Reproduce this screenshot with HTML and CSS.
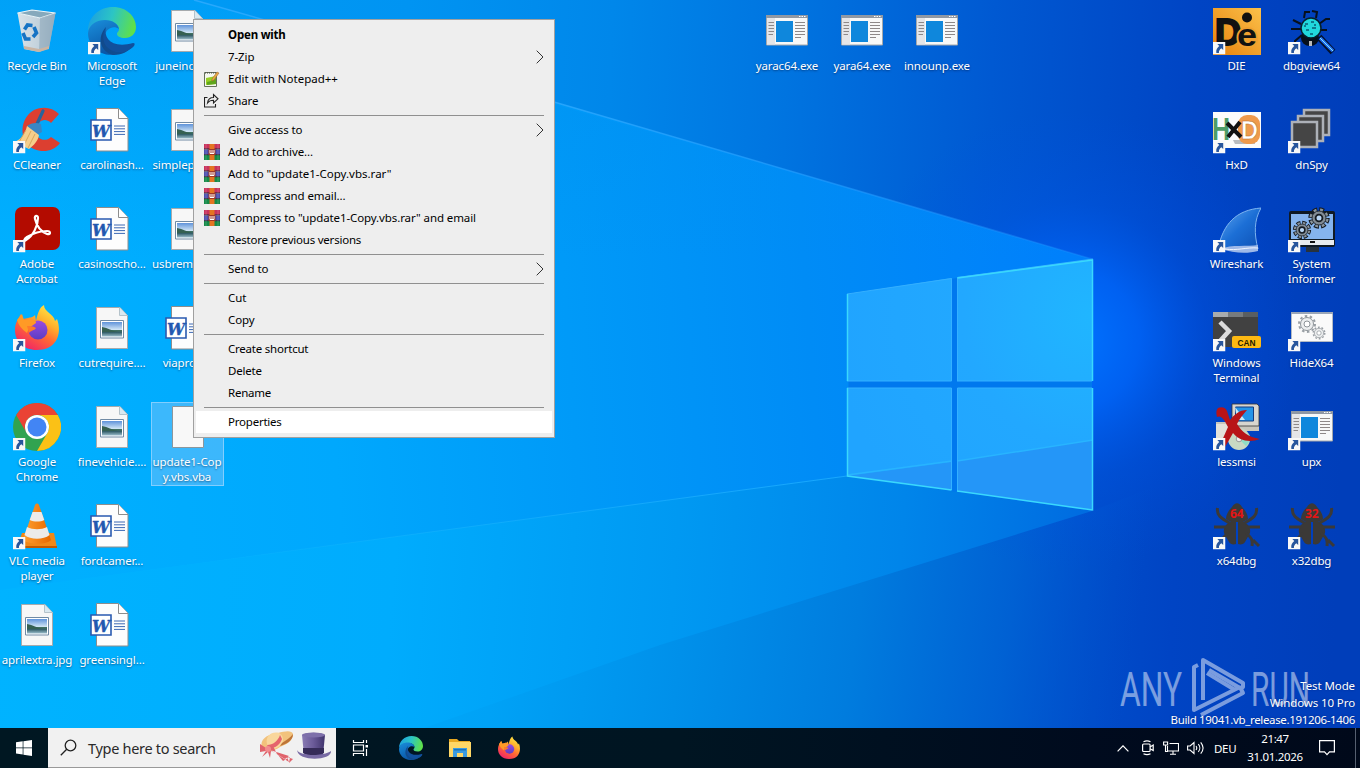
FILE: index.html
```html
<!DOCTYPE html>
<html lang="en">
<head>
<meta charset="utf-8">
<title>Desktop</title>
<link rel="stylesheet" href="styles.css">
</head>
<body>
<svg class="defs" width="0" height="0" aria-hidden="true">
  <defs>
    <linearGradient id="edgeTop" x1="0" y1="0.2" x2="1" y2="0.4"><stop offset="0" stop-color="#1b9de2"/><stop offset=".5" stop-color="#2cc5c4"/><stop offset="1" stop-color="#5fe04a"/></linearGradient>
    <linearGradient id="edgeMid" x1="0" y1="0" x2="0.4" y2="1"><stop offset="0" stop-color="#1a8fdc"/><stop offset="1" stop-color="#0a57a8"/></linearGradient>
    <linearGradient id="edgeLow" x1="0" y1="0" x2="1" y2="0"><stop offset="0" stop-color="#114a8b"/><stop offset="1" stop-color="#0d4f97"/></linearGradient>
    <linearGradient id="ffBody" x1="0.85" y1="0" x2="0.25" y2="1"><stop offset="0" stop-color="#fff04a"/><stop offset=".35" stop-color="#ffb02c"/><stop offset=".6" stop-color="#ff6a33"/><stop offset="1" stop-color="#f0206a"/></linearGradient>
    <linearGradient id="ffCore" x1="0" y1="0" x2="0" y2="1"><stop offset="0" stop-color="#9a4ae0"/><stop offset="1" stop-color="#5a3ec4"/></linearGradient>
    <linearGradient id="sky" x1="0" y1="0" x2="0" y2="1"><stop offset="0" stop-color="#5f93da"/><stop offset=".55" stop-color="#d4e8f6"/><stop offset=".56" stop-color="#42735f"/><stop offset=".72" stop-color="#35606a"/><stop offset="1" stop-color="#9dbfce"/></linearGradient>
    <linearGradient id="dieBg" x1="0" y1="1" x2="1" y2="0"><stop offset="0" stop-color="#e8820c"/><stop offset="1" stop-color="#fbc04a"/></linearGradient>
    <linearGradient id="fin" x1="0" y1="0" x2="1" y2="1"><stop offset="0" stop-color="#62a8f0"/><stop offset=".5" stop-color="#1c6fd6"/><stop offset="1" stop-color="#0d50b4"/></linearGradient>
    <linearGradient id="cone" x1="0" y1="0" x2="1" y2="0"><stop offset="0" stop-color="#ffa030"/><stop offset="1" stop-color="#e66800"/></linearGradient>
    <linearGradient id="bin" x1="0" y1="0" x2="1" y2="0"><stop offset="0" stop-color="#d9e2e8"/><stop offset=".55" stop-color="#c3d2dc"/><stop offset="1" stop-color="#a0b5c4"/></linearGradient>
    <linearGradient id="purple" x1="0" y1="0" x2="1" y2="0"><stop offset="0" stop-color="#8a7cb4"/><stop offset=".5" stop-color="#6a5a98"/><stop offset="1" stop-color="#40346c"/></linearGradient>

    <symbol id="arrow" viewBox="0 0 12 12"><path d="M0 0h12v12H0z" fill="#f8f8f8"/><path d="M4.200 2h5.600v5.600L8 5.900C6.200 7.300 5.600 8.500 5.700 10.500H3.200C2.700 7.500 3.900 5.600 6 3.900z" fill="#27559c"/></symbol>

    <symbol id="edge" viewBox="0 0 48 48">
      <path d="M0 24C0 10 11 0 25 0s23 10 23 20c0 7-5 11-11 11-5 0-8-2-8-4s2-2 2-5c0-4-5-8-12-8C9 14 2 19 0 24z" fill="url(#edgeTop)"/>
      <path d="M0 26C1 17 9 13 17 13c8 0 13 4 14 9-5-4-14-1-14 8 0 8 6 14 13 17C13 51 0 40 0 26z" fill="url(#edgeMid)"/>
      <path d="M18 20c-4 9 0 24 14 24 5 0 9-2 13-6-4 7-12 10-20 10C13 45 8 31 18 20z" fill="url(#edgeLow)"/>
      <path d="M18 20c-3 11 6 22 27 16 2 0 2 1 1 3-7 8-20 8-26 2-6-5-6-15-2-21z" fill="#11509c"/>
    </symbol>
    <symbol id="firefox" viewBox="0 0 48 48">
      <path d="M2 26C2 19 5 15 8 10l2 5 5-1c3-1 4 0 7-3l1 6C25 8 27 3 31 1c0 7 10 9 11 16l2-2c5 13 1 31-20 31C10 46 2 37 2 26z" fill="url(#ffBody)"/>
      <circle cx="25" cy="26" r="9.500" fill="url(#ffCore)"/>
      <path d="M4 16l5-6 2 6 6-1c3 1 6 0 6 4l-7 5-2 5c-5-4-8-7-10-13z" fill="#ff9a26"/>
      <path d="M14 22c3 0 6 0 9 2-2 3-5 2-7 5z" fill="#ff7b28"/>
    </symbol>
    <symbol id="chrome" viewBox="0 0 48 48">
      <circle cx="24" cy="24" r="24" fill="#31a350"/>
      <path d="M3.200 12A24 24 0 0 1 44.800 12H24A12 12 0 0 0 13.600 30z" fill="#ea4335"/>
      <path d="M44.800 12A24 24 0 0 1 24 48L34.400 30A12 12 0 0 0 24 12z" fill="#fbc116"/>
      <circle cx="24" cy="24" r="12" fill="#fff"/><circle cx="24" cy="24" r="9.500" fill="#4285f4"/>
    </symbol>
    <symbol id="recycle" viewBox="0 0 48 48">
      <path d="M4.500 6L11 42l15 3 10-4 6.500-35-16 5z" fill="url(#bin)"/>
      <path d="M4.500 6L19 3l23.500 3L27 11z" fill="#86a9bc" stroke="#eef4f6" stroke-width="1.200"/>
      <path d="M27 11L26 45l10-4 6.500-35z" fill="#8da9ba" opacity=".6"/><path d="M11 39l15 3 10-3v3l-10 3-15-3z" fill="#c9b5a4"/>
      <g fill="none" stroke="#1673c4" stroke-width="3.600"><path d="M11.500 22.500l3-4.500 5 .5"/><path d="M21 20l2.500 6-3.500 4"/><path d="M17.500 32h-5l-2.500-6"/></g>
    </symbol>
    <symbol id="ccleaner" viewBox="0 0 48 48">
      <path d="M46 8L38 17c-6-6-14-2-15 6-1 10 9 14 15 8l9 6C39 48 22 47 14 38 6 27 9 11 21 4c9-4 18-3 25 4z" fill="#dc3f30"/>
      <path d="M30 5l-7 15" stroke="#28649c" stroke-width="3.200" stroke-linecap="round"/>
      <path d="M14 20c4-3 9-4 14-2l1 8-5 3z" fill="#3a86c4"/>
      <path d="M14 20l12 9c-1 6-5 10-10 14L1 36c7-2 11-8 13-16z" fill="#f5ce8b"/><path d="M18 25l-7 14m11-11l-7 14m-2-18L6 36" stroke="#d9a65a" fill="none"/>
    </symbol>
    <symbol id="acrobat" viewBox="0 0 48 48">
      <rect x="2" y="2" width="45" height="43" rx="7" fill="#b30b00"/>
      <path d="M13 35c7-4 12-14 12-22 0-3-4-3-3 1 2 8 7 13 12 15 4 1 4-3 0-3-8 0-15 3-20 6-3 2-4 5-1 3z" fill="none" stroke="#fff" stroke-width="2.200"/>
    </symbol>
    <symbol id="vlc" viewBox="0 0 48 48">
      <path d="M9 31h32l3 15H4z" fill="#f08818"/><path d="M4 44h40v2H4z" fill="#c45a00"/>
      <path d="M22 3c1-2 3-2 4 0l12 35c-5 5-21 5-28 0z" fill="url(#cone)"/>
      <path d="M19.500 10h9l2.800 8c-4 2-10 2-14.600 0zM14 25c6 3 14 3 20 0l2.500 8c-6 5-19 5-25 0z" fill="#ecebea"/>
    </symbol>
    <symbol id="word" viewBox="0 0 48 48">
      <path d="M8.500 2.500h22l9.500 10v32.500H8.500z" fill="#fdfdfd" stroke="#8d8d8d"/><path d="M30.500 2.500V12.500H40" fill="#fff" stroke="#8d8d8d"/>
      <path d="M26 20h11M26 22.800h11M26 25.600h11M26 28.400h11" stroke="#3c68b4"/>
      <path d="M3 14h20v20H3z" fill="#fff" stroke="#2a5ab0" stroke-width="1.600"/>
      <text class="glyph-w" x="4" y="30.500" textLength="18" lengthAdjust="spacingAndGlyphs">W</text>
    </symbol>
    <symbol id="photo" viewBox="0 0 48 48">
      <path d="M8.500 3.500h23.500l7.500 8v33H8.500z" fill="#f7f7f7" stroke="#a6aaad"/><path d="M31.500 3.500v8h8" fill="#d9e8f0" stroke="#b4c2ca"/>
      <path d="M12.500 16.500h23v17.500h-23z" fill="#fff" stroke="#708aa4"/><path d="M14 18h20v14.500H14z" fill="url(#sky)"/><path d="M14 23c6 1 10 4 16 5H14z" fill="#356052"/>
    </symbol>
    <symbol id="blank" viewBox="0 0 48 48"><path d="M8.500 3.500h31v41h-31z" fill="#f8f8f8" stroke="#8c969c"/></symbol>
    <symbol id="exe" viewBox="0 0 48 48">
      <path d="M3.500 8.500h41v29.500H3.500z" fill="#f7f8f8" stroke="#a5a8ab"/><path d="M3 8h42v3H3z" fill="#8f98a4"/><path d="M36 9.500h7" stroke="#fff" stroke-dasharray="1.500 1"/>
      <path d="M4 11h8V37.500H4z" fill="#e4e5e8"/><path d="M13 14h17v21H13z" fill="#0f87dc"/>
      <path d="M5.500 15.500h5.500M5.500 18.500h5.500M5.500 21.500h5.500M5.500 24.500h5.500M5.500 27.500h4.500M32 15.500h10M32 18.500h10M32 21.500h10M32 24.500h10M32 27.500h10M32 30.500h6" stroke="#8d8888" stroke-width="1"/>
    </symbol>
    <symbol id="die" viewBox="0 0 48 48">
      <path d="M0 1h48v47H0z" fill="url(#dieBg)"/>
      <text class="glyph-die" x="2" y="38" textLength="26" lengthAdjust="spacingAndGlyphs" font-size="36" stroke="#111" stroke-width="2">D</text>
      <text class="glyph-die" x="24" y="39" textLength="20" lengthAdjust="spacingAndGlyphs" font-size="32" stroke="#f0a030" stroke-width="3.500" paint-order="stroke">e</text>
      <circle cx="34" cy="10.500" r="5" fill="#111"/>
    </symbol>
    <symbol id="dbgview" viewBox="0 0 48 48">
      <g fill="none" stroke="#07101c" stroke-width="2"><path d="M16 11l1-6h5M28 11l1-6-5-1M13 17l-8-4M13 22H3M14 28l-7 6v4M31 17l7-5h4M32 23h7"/></g>
      <ellipse cx="22" cy="31" rx="9" ry="8" fill="#07101c"/><path d="M21 34h3v5h-3z" fill="#bbb"/>
      <circle cx="23" cy="21" r="10" fill="#21d8dc" stroke="#06202c" stroke-width="1.500"/>
      <path d="M17 17h3m3-2h3m-8 8h3m3-2h4m-6 6h3m-9-8h2m8-1h2" stroke="#075c74" stroke-width="1.500"/>
      <path d="M31 30l14 15" stroke="#03122e" stroke-width="6.500"/><path d="M32 31l13 13" stroke="#1f6cf0" stroke-width="3.500"/><path d="M32 31l13 13" stroke="#7ee4ff"/>
    </symbol>
    <symbol id="hxd" viewBox="0 0 48 48">
      <path d="M0 6h48v36H0z" fill="#fbfbfb"/>
      <text class="glyph-bold" x="-1" y="34" font-size="32" fill="#4d9c68" textLength="18" lengthAdjust="spacingAndGlyphs">H</text>
      <path d="M20 34h22v4H22z" fill="#b9bcc0"/>
      <rect x="25" y="9" width="22" height="29" rx="9" fill="#ef9a4c"/>
      <text class="glyph-bold" x="28" y="33" font-size="26" fill="#fff" stroke="#b96b22" stroke-width=".5" textLength="17" lengthAdjust="spacingAndGlyphs">D</text>
      <path d="M14 17l14 14M27 16L15 31" stroke="#111" stroke-width="4"/>
    </symbol>
    <symbol id="dnspy" viewBox="0 0 48 48"><g fill="#454545" stroke="#adb1b8" stroke-width="2.500"><rect x="16" y="4" width="25" height="25"/><rect x="10" y="10" width="25" height="25"/><rect x="4" y="16" width="25" height="25"/></g></symbol>
    <symbol id="wireshark" viewBox="0 0 48 48">
      <path d="M5 44C10 19 23 5 48 3c-7 12-7 26-3 41z" fill="url(#fin)" stroke="#7db4f0" stroke-width="1"/>
      <path d="M8 44c10-5 27-2 37-4v6C34 49 20 48 8 44z" fill="#9eb9e8"/><path d="M12 44c12 2 22-2 33-1" stroke="#f0f5ff" fill="none"/>
    </symbol>
    <g id="gear"><circle r="8" fill="none" stroke="#151b22" stroke-width="5.500" stroke-dasharray="4.400 1.883"/><circle r="8" fill="none" stroke="#8b959d" stroke-width="3.200" stroke-dasharray="2.800 3.483" stroke-dashoffset="-.8"/><circle r="7" fill="#818b94" stroke="#151b22" stroke-width=".8"/><circle r="3.400" fill="#b9d6f5" stroke="#151b22" stroke-width="1.800"/></g>
    <symbol id="sysinf" viewBox="0 0 48 48">
      <path d="M18 39h13v8H18z" fill="#27323d"/><rect x="1" y="6" width="46" height="36" rx="2" fill="#101a24"/><path d="M3 9h42v25H3z" fill="#85b4ee"/><path d="M2 35h44v5H2z" fill="#e7ebef"/><path d="M22 37h5" stroke="#111" stroke-width="2"/>
      <use href="#gear" transform="translate(14 25) scale(.85)"/><use href="#gear" transform="translate(31 13)"/>
    </symbol>
    <symbol id="terminal" viewBox="0 0 48 48">
      <path d="M0 8h45v35H0z" fill="#414141"/><path d="M0 8h15v5H0z" fill="#a8abad"/><path d="M15 8h15v5H15z" fill="#777b7e"/><path d="M30 8h15v5H30z" fill="#5a5e61"/>
      <path d="M7 18l9 9-9 10" stroke="#dcdcdc" stroke-width="4.500" fill="none"/>
      <rect x="19" y="32" width="29" height="12" rx="2" fill="#fdb913"/><text class="glyph-bold" x="24.500" y="41.500" font-size="9.500" fill="#241a00" textLength="18" lengthAdjust="spacingAndGlyphs">CAN</text>
    </symbol>
    <g id="cog"><circle r="6.500" fill="#eceeef" stroke="#8e9499"/><circle r="8" fill="none" stroke="#999fa5" stroke-width="2" stroke-dasharray="2.500 2.530"/><circle r="3" fill="#fff" stroke="#8e9499"/></g>
    <symbol id="hidex" viewBox="0 0 48 48"><path d="M3.500 8.500h41v29h-41z" fill="#fafafa" stroke="#b3bac4"/><path d="M3 8h42v2H3z" fill="#9aa6b8"/><use href="#cog" x="19" y="20"/><use href="#cog" transform="translate(31 29) scale(.72)"/></symbol>
    <symbol id="lessmsi" viewBox="0 0 48 48">
      <path d="M3 19h40l3 3v6H3z" fill="#c9c6bc"/><path d="M3 21h18v16H3z" fill="#e3e1da"/><path d="M19 1h25l2 2v20H19z" fill="#d8d6cf" stroke="#333" stroke-width=".8"/><path d="M22.500 4h18v14h-18z" fill="#2494e8" stroke="#123c80"/><path d="M22 4l10 13h-8z" fill="#c9ecfa"/>
      <circle cx="26" cy="36" r="11" fill="#c9d9c3"/><path d="M26 36l10-5c2 5 0 9-3 12z" fill="#8edec6"/><circle cx="26" cy="36" r="2.800" fill="#efefef" stroke="#999"/>
      <path d="M5 5c4-2 8 0 9 3l3 9C21 12 26 7 34 7c-4 5-8 9-10 14 5 8 11 13 23 15-10 4-21 2-27-6L12 44 7 42l8-18C11 16 8 12 4 14 3 10 3 7 5 5z" fill="#b81418"/>
    </symbol>
    <symbol id="beetle" viewBox="0 0 48 48">
      <g fill="#3b3937">
        <path d="M13 17c0-5 3-9 6-12 3-5 7-5 10 0 3 3 6 7 6 12l-5 3H18z"/>
        <path d="M17 20h6v22c-3 1-6 0-7-2l-5-9c-1-5 2-9 6-11zM31 20h-6v22c3 1 6 0 7-2l5-9c1-5-2-9-6-11z"/>
      </g>
      <path d="M4.500 6c-1 7 3 10 12 15M43.500 6c1 7-3 10-12 15M1 25h12m22 0h12M9 44c-1-8 2-9 6-13m24 13c1-8-2-9-6-13m7 7l6 6" stroke="#3b3937" stroke-width="3" fill="none"/>
    </symbol>
    <symbol id="rar" viewBox="0 0 16 16">
      <path d="M0 0h16v5H0z" fill="#c8325c"/><path d="M0 5.500h16v5H0z" fill="#4c4fb0"/><path d="M0 11h16v5H0z" fill="#148a48"/><path d="M0 5h16M0 10.700h16" stroke="#272039"/>
      <path d="M5.500 0h5v16h-5z" fill="#e47522"/><path d="M4.500 5h7v6h-7z" fill="#a03727"/><path d="M6 6v3.500h4V6M8 6v3" stroke="#fff" fill="none"/><path d="M2 0v16M14 0v16" stroke="#fff" opacity=".18"/>
    </symbol>
    <symbol id="chev" viewBox="0 0 8 14"><path d="M.7.7L7 7 .7 13.300" fill="none" stroke="#333" stroke-width="1"/></symbol>
  </defs>
</svg>

<main class="screen">
  <svg class="wallpaper" viewBox="0 0 1360 768" aria-hidden="true">
    <defs>
      <linearGradient id="wall" x1="0" y1="0" x2="1360" y2="60" gradientUnits="userSpaceOnUse"><stop offset="0" stop-color="#009ff6"/><stop offset=".3" stop-color="#0094f2"/><stop offset=".45" stop-color="#0087ea"/><stop offset=".58" stop-color="#0074e0"/><stop offset=".73" stop-color="#0059d2"/><stop offset=".88" stop-color="#0044c4"/><stop offset="1" stop-color="#003eba"/></linearGradient>
      <linearGradient id="beam" x1="0" y1="80" x2="1092" y2="0" gradientUnits="userSpaceOnUse"><stop offset="0" stop-color="#00b0ff"/><stop offset=".28" stop-color="#00a8fd"/><stop offset=".5" stop-color="#009af8"/><stop offset=".72" stop-color="#008cf6"/><stop offset="1" stop-color="#007efc"/></linearGradient>
      <linearGradient id="shade" x1="0" y1="0" x2="0" y2="260" gradientUnits="userSpaceOnUse"><stop offset="0" stop-color="#008cec" stop-opacity=".4"/><stop offset="1" stop-color="#008cec" stop-opacity="0"/></linearGradient>
      <linearGradient id="floor" x1="0" y1="560" x2="1120" y2="640" gradientUnits="userSpaceOnUse"><stop offset="0" stop-color="#00b3ff"/><stop offset=".35" stop-color="#00acfd"/><stop offset=".6" stop-color="#0099f2"/><stop offset=".8" stop-color="#0085ea"/><stop offset="1" stop-color="#0066de"/></linearGradient>
      <linearGradient id="base" x1="240" y1="560" x2="1300" y2="700" gradientUnits="userSpaceOnUse"><stop offset="0" stop-color="#00b1ff"/><stop offset=".25" stop-color="#00a2f6"/><stop offset=".42" stop-color="#0090ea"/><stop offset=".58" stop-color="#007cde"/><stop offset=".72" stop-color="#0063d4" stop-opacity=".85"/><stop offset=".84" stop-color="#0050cc" stop-opacity="0"/></linearGradient>
      <radialGradient id="glow" cx="1070" cy="340" r="230" gradientUnits="userSpaceOnUse"><stop offset="0" stop-color="#0074ff"/><stop offset=".3" stop-color="#0068ff" stop-opacity=".75"/><stop offset=".6" stop-color="#0058ec" stop-opacity=".3"/><stop offset="1" stop-color="#0050e0" stop-opacity="0"/></radialGradient>
      <radialGradient id="pane" cx="1092" cy="315" r="260" gradientUnits="userSpaceOnUse"><stop offset="0" stop-color="#20b6ff"/><stop offset=".5" stop-color="#22a8ff"/><stop offset="1" stop-color="#20a4ff"/></radialGradient>
      <linearGradient id="rayA" x1="500" y1="0" x2="1092" y2="0" gradientUnits="userSpaceOnUse"><stop offset="0" stop-color="#28a8fc"/><stop offset="1" stop-color="#2494ff" stop-opacity=".3"/></linearGradient>
      <linearGradient id="rayB" x1="200" y1="0" x2="847" y2="0" gradientUnits="userSpaceOnUse"><stop offset="0" stop-color="#28c0ff" stop-opacity="0"/><stop offset="1" stop-color="#18a8ff"/></linearGradient>
    </defs>
    <path d="M0 0h1360v768H0z" fill="url(#wall)"/>
    <path d="M0 560L850 476l242 35 268-105v362H0z" fill="url(#base)"/>
    <circle cx="1070" cy="340" r="230" fill="url(#glow)"/>
    <path d="M194 0L554 102 1092 259v252L847 476 0 590V0z" fill="url(#beam)"/>
    <path d="M0 0h194L1092 260H0z" fill="url(#shade)"/>
    <path d="M0 590L847 476l245 35L660 645 390 740H0z" fill="url(#floor)"/>
    <path d="M194 0L554 102 1092 259" stroke="url(#rayA)" fill="none" stroke-width="1.500"/>
    <path d="M200 563L847 476" stroke="url(#rayB)" fill="none"/>
    <path d="M850 293L1092 259v252L847 476z" fill="#0078ee"/>
    <path d="M847 294L952 278V381H847zM957 277L1093 259V381H957zM847 388H952V490L847 476zM957 388H1093V510L957 491z" fill="url(#pane)"/>
    <path d="M847 476L952 462v28zM957 461l136-21v70l-136-19z" fill="#2496f8"/>
    <path d="M847 475L952 461M957 461l136-21" stroke="#28b4ff" stroke-width="1.500"/>
    <g fill="none" stroke="#34b0ff"><path d="M847 294L951.500 278.500V381H847M957.500 381V277.500L1093 259M957 381h135M847 388h104.500v102M957.500 491V388H1092"/></g>
    <path d="M847.500 381V294M847.500 388v88l104 14M957 491l135.500 19V388M1092.500 381V260l-135 18" fill="none" stroke="#3ad8fc" stroke-width="1.500"/>
  </svg>

  <section class="desktop">
    <div class="column col-a">
      <div class="item"><svg class="icon"><use href="#recycle"/></svg><span>Recycle Bin</span></div>
      <div class="item"><svg class="icon"><use href="#ccleaner"/><use href="#arrow" y="35" width="12.500" height="12.500"/></svg><span>CCleaner</span></div>
      <div class="item"><svg class="icon"><use href="#acrobat"/><use href="#arrow" y="35" width="12.500" height="12.500"/></svg><span>Adobe<br>Acrobat</span></div>
      <div class="item"><svg class="icon"><use href="#firefox"/><use href="#arrow" y="35" width="12.500" height="12.500"/></svg><span>Firefox</span></div>
      <div class="item"><svg class="icon"><use href="#chrome"/><use href="#arrow" y="35" width="12.500" height="12.500"/></svg><span>Google<br>Chrome</span></div>
      <div class="item"><svg class="icon"><use href="#vlc"/><use href="#arrow" y="35" width="12.500" height="12.500"/></svg><span>VLC media<br>player</span></div>
      <div class="item"><svg class="icon"><use href="#photo"/></svg><span>aprilextra.jpg</span></div>
    </div>
    <div class="column col-b">
      <div class="item"><svg class="icon"><use href="#edge"/><use href="#arrow" y="35" width="12.500" height="12.500"/></svg><span>Microsoft<br>Edge</span></div>
      <div class="item"><svg class="icon"><use href="#word"/></svg><span>carolinash...</span></div>
      <div class="item"><svg class="icon"><use href="#word"/></svg><span>casinoscho...</span></div>
      <div class="item"><svg class="icon"><use href="#photo"/></svg><span>cutrequire....</span></div>
      <div class="item"><svg class="icon"><use href="#photo"/></svg><span>finevehicle....</span></div>
      <div class="item"><svg class="icon"><use href="#word"/></svg><span>fordcamer...</span></div>
      <div class="item"><svg class="icon"><use href="#word"/></svg><span>greensingl...</span></div>
    </div>
    <div class="column col-c">
      <div class="item"><svg class="icon"><use href="#photo"/></svg><span>juneindivi....</span></div>
      <div class="item"><svg class="icon"><use href="#photo"/></svg><span>simplepart....</span></div>
      <div class="item"><svg class="icon"><use href="#photo"/></svg><span>usbremem....</span></div>
      <div class="item"><svg class="icon"><use href="#word"/></svg><span>viapro.rtf</span></div>
      <div class="item selected"><svg class="icon"><use href="#blank"/></svg><span>update1-Cop<br>y.vbs.vba</span></div>
    </div>
    <div class="column col-k"><div class="item"><svg class="icon"><use href="#exe"/></svg><span>yarac64.exe</span></div></div>
    <div class="column col-l"><div class="item"><svg class="icon"><use href="#exe"/></svg><span>yara64.exe</span></div></div>
    <div class="column col-m"><div class="item"><svg class="icon"><use href="#exe"/></svg><span>innounp.exe</span></div></div>
    <div class="column col-q">
      <div class="item"><svg class="icon"><use href="#die"/><use href="#arrow" y="35" width="12.500" height="12.500"/></svg><span>DIE</span></div>
      <div class="item"><svg class="icon"><use href="#hxd"/><use href="#arrow" y="35" width="12.500" height="12.500"/></svg><span>HxD</span></div>
      <div class="item"><svg class="icon"><use href="#wireshark"/><use href="#arrow" y="35" width="12.500" height="12.500"/></svg><span>Wireshark</span></div>
      <div class="item"><svg class="icon"><use href="#terminal"/><use href="#arrow" y="35" width="12.500" height="12.500"/></svg><span>Windows<br>Terminal</span></div>
      <div class="item"><svg class="icon"><use href="#lessmsi"/><use href="#arrow" y="35" width="12.500" height="12.500"/></svg><span>lessmsi</span></div>
      <div class="item"><svg class="icon"><use href="#beetle"/><text class="bug-no" x="17" y="15.500">64</text><use href="#arrow" y="35" width="12.500" height="12.500"/></svg><span>x64dbg</span></div>
    </div>
    <div class="column col-r">
      <div class="item"><svg class="icon"><use href="#dbgview"/><use href="#arrow" y="35" width="12.500" height="12.500"/></svg><span>dbgview64</span></div>
      <div class="item"><svg class="icon"><use href="#dnspy"/><use href="#arrow" y="35" width="12.500" height="12.500"/></svg><span>dnSpy</span></div>
      <div class="item"><svg class="icon"><use href="#sysinf"/><use href="#arrow" y="35" width="12.500" height="12.500"/></svg><span>System<br>Informer</span></div>
      <div class="item"><svg class="icon"><use href="#hidex"/><use href="#arrow" y="35" width="12.500" height="12.500"/></svg><span>HideX64</span></div>
      <div class="item"><svg class="icon"><use href="#exe"/><use href="#arrow" y="35" width="12.500" height="12.500"/></svg><span>upx</span></div>
      <div class="item"><svg class="icon"><use href="#beetle"/><text class="bug-no" x="17" y="15.500">32</text><use href="#arrow" y="35" width="12.500" height="12.500"/></svg><span>x32dbg</span></div>
    </div>
  </section>

  <div class="watermark">
    <svg width="192" height="62" viewBox="0 0 192 62">
      <g fill="none" stroke="#fff" stroke-width="4" stroke-linejoin="round">
        <path d="M79 9l-4 2v43l46-23"/><path d="M84 44V4l40 23v4l-3 1-31-18"/><path d="M88 17l28 17"/><path d="M82 59l42-22-2-4"/>
      </g>
      <g class="brand"><text x="1" y="50" textLength="62" lengthAdjust="spacingAndGlyphs">ANY</text><text x="132" y="50" textLength="59" lengthAdjust="spacingAndGlyphs">RUN</text></g>
    </svg>
  </div>
  <div class="build"><span>Test Mode</span><span>Windows 10 Pro</span><span class="build-no">Build 19041.vb_release.191206-1406</span></div>

  <nav class="menu">
    <div class="row strong"><i></i><span>Open with</span></div>
    <div class="row"><i></i><span>7-Zip</span><svg class="chev"><use href="#chev"/></svg></div>
    <div class="row"><i><svg width="16" height="16" viewBox="0 0 16 16"><path d="M.5 1.500h12v14H.5z" fill="#f5f8ef" stroke="#65705c"/><path d="M1 2h11" stroke="#444" stroke-dasharray="1 1"/><path d="M2 7l10-2v8l-10 1z" fill="#98cf24"/><path d="M3 11c3-1 6-1 9-4v6l-9 1z" fill="#5fa51c"/><path d="M8 8l5-7 2 1-5 7-2 1z" fill="#e7a943" stroke="#9b5b29" stroke-width=".5"/></svg></i><span class="wide">Edit with Notepad++</span></div>
    <div class="row"><i><svg width="16" height="16" viewBox="0 0 16 16" fill="none" stroke="#222" stroke-width="1.100"><path d="M3.500 4.500h-3v9.500h11v-3"/><path d="M3.500 10c.5-4 2.500-5.500 6-5.500V1.500L14 5.800 9.500 10V7.300C7 7.300 5 8 3.500 10z"/></svg></i><span>Share</span></div>
    <hr>
    <div class="row"><i></i><span>Give access to</span><svg class="chev"><use href="#chev"/></svg></div>
    <div class="row"><i><svg width="16" height="16"><use href="#rar"/></svg></i><span>Add to archive...</span></div>
    <div class="row"><i><svg width="16" height="16"><use href="#rar"/></svg></i><span class="wide">Add to "update1-Copy.vbs.rar"</span></div>
    <div class="row"><i><svg width="16" height="16"><use href="#rar"/></svg></i><span>Compress and email...</span></div>
    <div class="row"><i><svg width="16" height="16"><use href="#rar"/></svg></i><span>Compress to "update1-Copy.vbs.rar" and email</span></div>
    <div class="row"><i></i><span class="tight">Restore previous versions</span></div>
    <hr>
    <div class="row"><i></i><span>Send to</span><svg class="chev"><use href="#chev"/></svg></div>
    <hr>
    <div class="row"><i></i><span>Cut</span></div>
    <div class="row"><i></i><span>Copy</span></div>
    <hr>
    <div class="row"><i></i><span class="tight">Create shortcut</span></div>
    <div class="row"><i></i><span class="tight">Delete</span></div>
    <div class="row"><i></i><span class="tight">Rename</span></div>
    <hr>
    <div class="row hot"><i></i><span class="tight">Properties</span></div>
  </nav>

  <footer class="taskbar">
    <div class="start"><svg width="16" height="16" viewBox="0 0 16 16" fill="#fff"><path d="M0 2.300l6.700-1v6.300H0zM7.400 1.200L16 0v7.600H7.400zM0 8.300h6.700v6.300l-6.700-1zM7.400 8.300H16V16l-8.600-1.200z"/></svg></div>
    <div class="search">
      <svg width="17" height="17" viewBox="0 0 17 17" fill="none" stroke="#222" stroke-width="1.300"><circle cx="10.500" cy="6.500" r="5.300"/><path d="M6.700 10.300L.8 16.200"/></svg>
      <span>Type here to search</span>
      <svg class="hats" width="72" height="34" viewBox="0 0 72 34">
        <path d="M2 17C-1 8 8 3 18 2c7-2 14-3 15 1 0 7-6 10-13 13C14 20 6 23 2 17z" fill="#f2c27c"/><path d="M7 13C5 5 12 0 19 2c4 2 5 7 3 11-5 5-10 6-14 5z" fill="#f9d79c"/><path d="M22 12c4-3 8-5 11-9 0 7-7 10-13 12z" fill="#bd7438"/>
        <path d="M7 14c6 0 11-4 13-10l2 4c-2 6-7 9-13 10z" fill="#e5646c"/>
        <path d="M6 17l-6-4v8l6-1-4 6 6-5 2 6 1-7 6 3-4-8zM10 19l19 6-4 3zM18 24l11 7-2-5 6 2-4 4 1-6-7 4z" fill="#e0626b"/><circle cx="8" cy="18" r="3" fill="#f28b8e"/>
        <path d="M42 4c5-3 18-3 23 0l-2 20H44z" fill="url(#purple)"/><path d="M43 17h21v5c-7 3-15 3-21 0z" fill="#352b58"/><path d="M37 19c3 6 25 7 34 1 1 10-33 11-34-1z" fill="#786aa4"/><ellipse cx="53.500" cy="4" rx="11.500" ry="2.500" fill="#7e70aa"/>
      </svg>
    </div>
    <div class="apps">
      <svg class="taskview" width="17" height="16" viewBox="0 0 17 16" fill="none" stroke="#fff" stroke-width="1.200"><path d="M1.500 0v2.500h10V0M1.500 16v-2.500h10V16M1.500 5h10v6h-10zM14.500 0v3M14.500 9v7"/><path d="M13.500 5h2.500v2.500h-2.500z" fill="#fff" stroke="none"/></svg>
      <svg width="24" height="24" viewBox="0 0 48 48"><use href="#edge"/></svg>
      <svg width="24" height="24" viewBox="0 0 24 24"><path d="M1 3h8l2 2h11v6H1z" fill="#e9a820"/><path d="M1 6h22v15H1z" fill="#ffd766"/><path d="M5 12h14v9h-4v-4H9v4H5z" fill="#3b9be0"/><path d="M6 13h12v1.500H6z" fill="#1973bd"/></svg>
      <svg width="24" height="24" viewBox="0 0 48 48"><use href="#firefox"/></svg>
    </div>
    <div class="tray">
      <svg width="12" height="7" viewBox="0 0 12 7" fill="none" stroke="#fff" stroke-width="1.200"><path d="M.6 6.300L6 .8l5.400 5.500"/></svg>
      <svg width="12" height="16" viewBox="0 0 12 16" fill="none" stroke="#fff" stroke-width="1.200"><rect x=".6" y="4" width="7.500" height="7.500" rx="1"/><path d="M8 7l3.200-2v5.500L8 8.700M1.500 1.800Q5 0 8.500 1.800M1.500 13.800Q5 15.600 8.500 13.800"/></svg>
      <svg width="16" height="14" viewBox="0 0 16 14" fill="none" stroke="#fff" stroke-width="1.100"><path d="M.6 1h4v3h-4zM2.500 4v6.500H5M6.500 2.500h9v7.500h-11V5M10 10v3M7 13.300h6"/></svg>
      <svg width="17" height="14" viewBox="0 0 17 14" fill="none" stroke="#fff" stroke-width="1.100"><path d="M.6 5v4h2.500L7 12.500v-11L3.100 5zM9 5c1 1.300 1 2.700 0 4M11.300 3.200c2 2.200 2 5.400 0 7.600M13.700 1.300c3 3.600 3 7.800 0 11.400"/></svg>
      <span class="lang">DEU</span>
      <div class="clock"><span>21:47</span><span>31.01.2026</span></div>
      <svg class="note" width="16" height="16" viewBox="0 0 16 16" fill="none" stroke="#fff" stroke-width="1.200"><path d="M.6.600h14.800v11.200H10.500L8 14.600 5.500 11.800H.600z"/></svg>
    </div>
    <div class="peek"></div>
  </footer>
</main>
</body>
</html>
```
FILE: styles.css
```css
* { box-sizing: border-box; }
body { margin: 0; font-family: "Noto Sans", "Open Sans", sans-serif; font-size: 12px; overflow: hidden; }
.defs { position: absolute; }
.screen { position: relative; width: 1360px; height: 768px; display: flex; flex-direction: column; overflow: hidden; }
.wallpaper { position: absolute; inset: 0; width: 1360px; height: 768px; }

.desktop { position: relative; flex: 1; display: grid; grid-template-columns: repeat(18, 75px); min-height: 0; }
.column { display: flex; flex-direction: column; grid-row: 1; }
.col-a { grid-column: 1; }
.col-b { grid-column: 2; }
.col-c { grid-column: 3; }
.col-k { grid-column: 11; }
.col-l { grid-column: 12; }
.col-m { grid-column: 13; }
.col-q { grid-column: 17; }
.col-r { grid-column: 18; }
.item { height: 99px; padding-top: 7px; display: flex; flex-direction: column; color: #fff; }
.icon { width: 48px; height: 48px; margin-left: 13px; flex: none; overflow: visible; }
.item span { width: 74px; margin-top: 3px; line-height: 15px; font-size: 11.5px; letter-spacing: -0.1px; text-align: center; white-space: nowrap; text-shadow: 0 1px 2px rgba(0, 20, 60, .55); }
.col-q span, .col-r span { width: 73px; letter-spacing: -0.15px; }
.selected { width: 73px; height: 84px; margin: 6px 0 0 0.5px; padding-top: 1px; background: rgba(120, 195, 250, .5); box-shadow: inset 0 0 0 1px rgba(160, 215, 255, .7); }
.selected span { width: 73px; }
.glyph-w { font: italic bold 17px "DejaVu Serif", serif; fill: #2358b0; stroke: #2358b0; stroke-width: .4px; }
.glyph-die, .glyph-bold { font-family: "Liberation Sans", sans-serif; font-weight: bold; }
.glyph-die { fill: #111; }
.bug-no { font: bold 12px "Open Sans", sans-serif; fill: #e41414; }

.watermark { position: absolute; left: 1119px; top: 656px; opacity: .48; }
.watermark svg { display: block; overflow: visible; }
.brand { font: 400 48px Roboto, sans-serif; fill: #fff; }
.build { position: absolute; right: 5px; bottom: 40px; display: flex; flex-direction: column; align-items: flex-end; color: #fff; font-size: 11.5px; line-height: 17px; letter-spacing: -0.1px; text-shadow: 0 0 2px rgba(0, 20, 80, .5); }
.build-no { letter-spacing: -0.34px; }

.menu { position: absolute; left: 193px; top: 19px; width: 362px; height: 419px; padding: 4px 2px; background: #eee; border: 1px solid #a0a0a0; color: #000; }
.row { height: 22px; display: flex; align-items: center; padding: 0 8px; font-size: 11.5px; letter-spacing: -0.1px; white-space: nowrap; }
.row i { width: 24px; height: 16px; display: flex; }
.row span { line-height: 16px; }
.row .wide { letter-spacing: 0; }
.row .tight { letter-spacing: -0.22px; }
.row .chev { width: 8px; height: 14px; margin-left: auto; }
.strong { font-weight: bold; letter-spacing: -0.2px; }
.hot { background: #fff; }
.menu hr { height: 7px; margin: 0 8px; border: 0; background: linear-gradient(#8f8f8f, #8f8f8f) 0 3px / 100% 1px no-repeat; }

.taskbar { position: relative; height: 40px; display: flex; background: linear-gradient(90deg, #001722, #001522 50%, #000b1e 80%, #00091a); color: #fff; }
.start { width: 48px; display: flex; align-items: center; justify-content: center; }
.search { width: 288px; height: 40px; display: flex; align-items: center; padding-left: 12px; background: #f1f1f1; border-bottom: 1px solid #999; color: #2a2a2a; font-size: 14.5px; }
.search span { margin-left: 11px; letter-spacing: -0.3px; }
.hats { margin-left: auto; margin-right: 4px; }
.apps { display: flex; align-items: center; padding-left: 16px; gap: 25px; }
.taskview { margin-right: 5px; }
.tray { margin-left: auto; display: flex; align-items: center; }
.tray svg { margin-right: 12px; }
.tray svg:nth-child(1) { margin-right: 13px; }
.tray svg:nth-child(2) { margin-right: 9px; }
.tray svg:nth-child(3) { margin-right: 8px; }
.tray svg:nth-child(4) { margin-right: 10px; }
.lang { width: 22px; margin-right: 11px; font-size: 11.5px; letter-spacing: -0.3px; }
.clock { width: 56px; display: flex; flex-direction: column; text-align: center; font-size: 11.5px; line-height: 18px; letter-spacing: -0.35px; }
.tray .note { margin: 0 20px 0 16px; }
.peek { width: 5px; border-left: 1px solid #566070; }
```
